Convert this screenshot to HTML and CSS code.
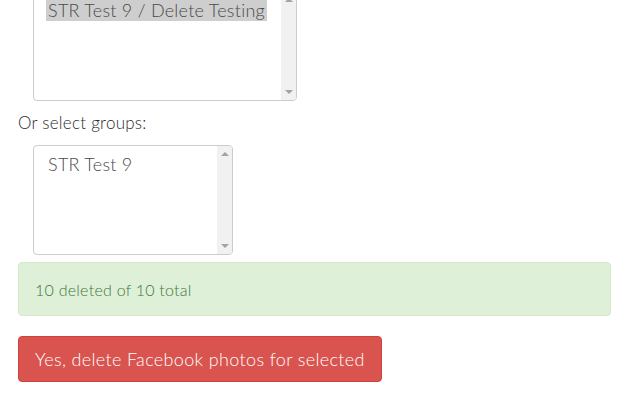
FILE: index.html
```html
<!DOCTYPE html>
<html>
<head>
<meta charset="utf-8">
<link rel="stylesheet" href="styles.css">
</head>
<body>
<div class="page">
  <div class="listbox listbox-wide listbox-cut">
    <div class="options">
      <div class="option selected">STR Test 9 / Delete Testing</div>
    </div>
    <div class="scrollbar">
      <span class="arrow up"></span>
      <span class="arrow down"></span>
    </div>
  </div>
  <div class="label">Or select groups:</div>
  <div class="listbox listbox-narrow">
    <div class="options">
      <div class="option">STR Test 9</div>
    </div>
    <div class="scrollbar">
      <span class="arrow up"></span>
      <span class="arrow down"></span>
    </div>
  </div>
  <div class="alert">10 deleted of 10 total</div>
  <button class="btn-danger">Yes, delete Facebook photos for selected</button>
</div>
</body>
</html>
```
FILE: styles.css
```css
html, body {
  margin: 0;
  padding: 0;
  background: #fff;
  overflow: hidden;
}
.page {
  padding: 0 29px 0 18px;
  font-family: Lato, "Open Sans", sans-serif;
  font-weight: 300;
  letter-spacing: 0.25px;
  color: #2a2a2a;
  display: flex;
  flex-direction: column;
  align-items: flex-start;
}
.listbox {
  margin-left: 15px;
  height: 110px;
  box-sizing: border-box;
  border: 1px solid #cccccc;
  border-radius: 4px;
  display: flex;
  overflow: hidden;
  background: #fff;
}
.listbox-cut {
  margin-top: -9px;
}
.listbox-wide {
  width: 264px;
}
.listbox-narrow {
  width: 200px;
  margin-top: 11px;
}
.options {
  flex: 1;
  padding: 8px 12px 0 12px;
  min-width: 0;
}
.option {
  font-size: 18px;
  line-height: 21px;
  color: #4a4a4a;
  padding: 0 2px;
  white-space: nowrap;
}
.option.selected {
  background: #cecece;
  display: inline-block;
}
.scrollbar {
  width: 15px;
  background: #f1f1f1;
  display: flex;
  flex-direction: column;
  justify-content: space-between;
  align-items: center;
  padding: 6px 0;
}
.arrow {
  width: 0;
  height: 0;
  border-left: 4px solid transparent;
  border-right: 4px solid transparent;
}
.arrow.up {
  border-bottom: 4px solid #a3a3a3;
}
.arrow.down {
  border-top: 4px solid #a3a3a3;
}
.label {
  font-size: 17px;
  margin-top: 11px;
  line-height: 22px;
}
.alert {
  align-self: stretch;
  margin-top: 7px;
  height: 54px;
  box-sizing: border-box;
  background: #dff0d8;
  border: 1px solid #d6e9c6;
  border-radius: 4px;
  color: #3c763d;
  font-size: 16px;
  padding: 0 16px;
  display: flex;
  align-items: center;
}
.btn-danger {
  margin-top: 20px;
  height: 46px;
  width: 364px;
  background: #d9534f;
  border: 1px solid #d43f3a;
  border-radius: 4px;
  color: #fff;
  font-family: Lato, "Open Sans", sans-serif;
  font-weight: 300;
  letter-spacing: 0.35px;
  font-size: 18px;
  padding: 0 16px;
  text-align: left;
}
```
